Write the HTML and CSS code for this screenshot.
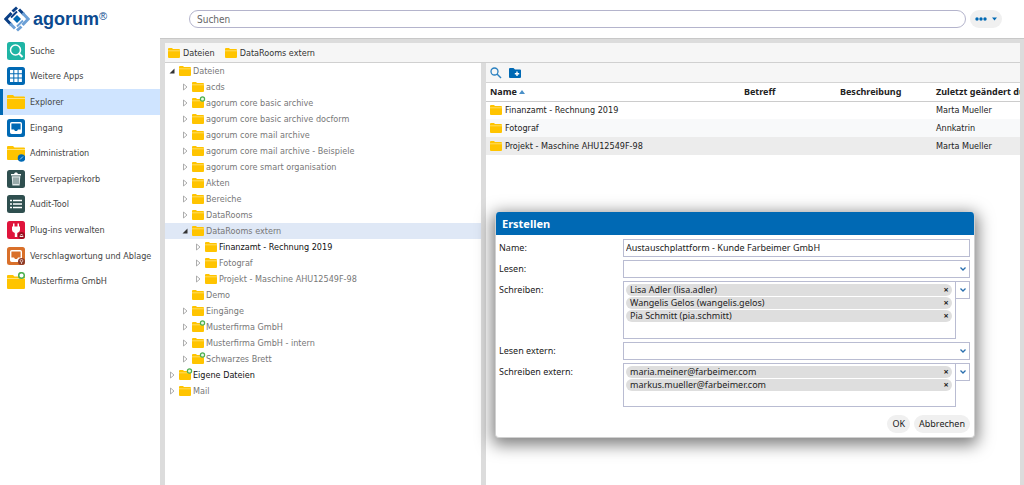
FILE: index.html
```html
<!DOCTYPE html>
<html lang="de">
<head>
<meta charset="utf-8">
<title>agorum core – Explorer</title>
<link rel="stylesheet" href="styles.css">
</head>
<body>
<svg class="defs" aria-hidden="true">
  <symbol id="folder" viewBox="0 0 12 10"><path fill="#ffc400" d="M0 1q0-1 1-1h3l1 1h6q1 0 1 1v7q0 1-1 1H1q-1 0-1-1z"/><path stroke="#ffe27a" stroke-width=".8" d="M0 2.8h12"/></symbol>
  <symbol id="folder-star" viewBox="0 0 14 12"><path fill="#ffc400" d="M0 3q0-1 1-1h3l1 1h6q1 0 1 1v7q0 1-1 1H1q-1 0-1-1z"/><path stroke="#ffe27a" stroke-width=".8" d="M0 4.8h12"/><circle cx="10.5" cy="3" r="2.1" fill="#e8f8e8" stroke="#4caf50" stroke-width="1.2"/></symbol>
  <symbol id="closed" viewBox="0 0 6 8"><path fill="#fff" stroke="#999" stroke-width=".8" d="M1.5 1v6L5 4z"/></symbol>
  <symbol id="open" viewBox="0 0 6 8"><path fill="#333" d="M5.5 1.5v5h-5z"/></symbol>
  <symbol id="chevron" viewBox="0 0 8 6"><path fill="none" stroke="#2a6fae" stroke-width="1.3" d="M1.5 1.5 4 4l2.500-2.500"/></symbol>
</svg>

<header class="top">
  <a class="logo" href="#" aria-label="agorum">
    <svg viewBox="0 0 26 26" width="26" height="26"><g fill="none" stroke-width="3"><path stroke="#0a3f85" d="M7.500 7 1.800 13l5.700 6"/><path stroke="#0a3f85" d="M8.500 5.500 13 1.500M15 3.500l5 5"/><path stroke="#6ca0d6" d="m18.500 7 5.700 6-5.700 6"/><path stroke="#6ca0d6" d="M17.500 20.500 13 24.500M11 22.500l-5-5"/><path stroke="#0a3f85" stroke-width="2" d="M13 5.500 7 11.500"/><path stroke="#6ca0d6" stroke-width="2" d="m13 20.500 6-6"/></g><path fill="#0069b4" d="m13 9 4 4-4 4-4-4z"/></svg>
    <span>agorum<sup>®</sup></span>
  </a>
  <input class="search" type="search" placeholder="Suchen" aria-label="Suchen">
  <button class="more" type="button" aria-label="Mehr"><svg width="26" height="6" viewBox="0 0 26 6"><g fill="#0069b4"><circle cx="2" cy="3" r="1.700"/><circle cx="6" cy="3" r="1.700"/><circle cx="10" cy="3" r="1.700"/><path d="M17 1.500h5L19.500 4.500z"/></g></svg></button>
</header>

<div class="app">
  <nav class="side">
    <a href="#"><svg viewBox="0 0 18 18"><rect width="18" height="18" rx="2.500" fill="#1fb5a5"/><circle cx="8.500" cy="8" r="5" fill="none" stroke="#fff" stroke-width="1.500"/><path stroke="#fff" stroke-width="2" d="m12 11.500 3.500 3.500"/></svg>Suche</a>
    <a href="#"><svg viewBox="0 0 18 18"><rect width="18" height="18" rx="2.500" fill="#0069b4"/><path fill="#fff" d="M3 3h3.300v3.300H3zM7.300 3h3.300v3.300H7.300zM11.600 3h3.300v3.300h-3.300zM3 7.300h3.300v3.300H3zM7.300 7.300h3.300v3.300H7.300zM11.600 7.300h3.300v3.300h-3.300zM3 11.600h3.300v3.300H3zM7.300 11.600h3.300v3.300H7.300zM11.600 11.600h3.300v3.300h-3.300z"/></svg>Weitere Apps</a>
    <a class="on" href="#" aria-current="page"><svg viewBox="0 0 18 18"><path fill="#ffc400" d="M0 3q0-1 1-1h5l1.500 1.500H17q1 0 1 1V15q0 1-1 1H1q-1 0-1-1z"/><path stroke="#ffe27a" d="M0 5.500h18"/></svg>Explorer</a>
    <a href="#"><svg viewBox="0 0 18 18"><rect width="18" height="18" rx="2.500" fill="#0069b4"/><rect x="3.700" y="3.700" width="10.600" height="10.600" rx="1" fill="none" stroke="#fff" stroke-width="1.400"/><path fill="#fff" d="M4 10.500h3l1 1.500h2l1-1.500h3V14H4z"/></svg>Eingang</a>
    <a href="#"><svg viewBox="0 0 18 18"><path fill="#ffc400" d="M0 3q0-1 1-1h5l1.500 1.500H17q1 0 1 1V15q0 1-1 1H1q-1 0-1-1z"/><path stroke="#ffe27a" d="M0 5.500h18"/><circle cx="14.500" cy="14" r="3.800" fill="#0069b4"/><path stroke="#9fd0f5" d="m13 15.500 3-3"/></svg>Administration</a>
    <a href="#"><svg viewBox="0 0 18 18"><rect width="18" height="18" rx="2.500" fill="#2f4f4f"/><path fill="#fff" d="M4 4h3l1-1.500h2L11 4h3v1.500H4z"/><path fill="#dfe6e6" d="M4.700 6.300h8.600l-.7 9.200H5.400z"/><path stroke="#2f4f4f" stroke-width=".8" d="M7 7.500v6.500M9 7.500v6.500M11 7.500v6.500"/></svg>Serverpapierkorb</a>
    <a href="#"><svg viewBox="0 0 18 18"><rect width="18" height="18" rx="2.500" fill="#2f4f4f"/><path stroke="#fff" stroke-width="1.500" d="M3 5.500h2M6 5.500h9M3 9h2M6 9h9M3 12.500h2M6 12.500h9"/></svg>Audit-Tool</a>
    <a href="#"><svg viewBox="0 0 18 18"><rect width="18" height="18" rx="2.500" fill="#e0143c"/><path fill="#fff" d="M6 2.500h1.500v3h3v-3H12v3h1V9q0 2-2.800 3v4H7.800v-4Q5 11 5 9V5.500h1z"/><circle cx="14.500" cy="14.500" r="3.500" fill="#9a1020"/><path fill="none" stroke="#fff" stroke-width=".9" d="M12.700 15.500h3.600M13.300 14.500l1.200-1.500 1.200 1.500"/></svg>Plug-ins verwalten</a>
    <a href="#"><svg viewBox="0 0 18 18"><rect width="18" height="18" rx="2.500" fill="#d9702a"/><rect x="3.700" y="3.700" width="10.600" height="10.600" rx="1" fill="none" stroke="#fff" stroke-width="1.400"/><path fill="#fff" d="M4 10.500h3l1 1.500h2l1-1.500h3V14H4z"/><circle cx="14.500" cy="14.500" r="3.500" fill="#8b3a2a"/><circle cx="14.500" cy="13.800" r="1.300" fill="none" stroke="#f0d8cc" stroke-width=".8"/><path stroke="#f0d8cc" stroke-width=".8" d="M14.500 15v2"/></svg>Verschlagwortung und Ablage</a>
    <a href="#"><svg viewBox="0 0 18 18"><path fill="#ffc400" d="M0 4q0-1 1-1h5l1.500 1.500H17q1 0 1 1V16q0 1-1 1H1q-1 0-1-1z"/><path stroke="#ffe27a" d="M0 6.500h18"/><circle cx="14.500" cy="3.500" r="2.800" fill="#fff" stroke="#4caf50" stroke-width="1.500"/></svg>Musterfirma GmbH</a>
  </nav>

  <main class="work">
    <nav class="crumbs">
      <a href="#"><svg class="f"><use href="#folder"/></svg>Dateien</a>
      <a href="#"><svg class="f"><use href="#folder"/></svg>DataRooms extern</a>
    </nav>
    <div class="split">
      <ul class="tree">
        <li><svg class="t"><use href="#open"/></svg><svg class="f"><use href="#folder"/></svg>Dateien</li>
        <li class="l1"><svg class="t"><use href="#closed"/></svg><svg class="f"><use href="#folder"/></svg>acds</li>
        <li class="l1"><svg class="t"><use href="#closed"/></svg><svg class="s"><use href="#folder-star"/></svg>agorum core basic archive</li>
        <li class="l1"><svg class="t"><use href="#closed"/></svg><svg class="f"><use href="#folder"/></svg>agorum core basic archive docform</li>
        <li class="l1"><svg class="t"><use href="#closed"/></svg><svg class="f"><use href="#folder"/></svg>agorum core mail archive</li>
        <li class="l1"><svg class="t"><use href="#closed"/></svg><svg class="f"><use href="#folder"/></svg>agorum core mail archive - Beispiele</li>
        <li class="l1"><svg class="t"><use href="#closed"/></svg><svg class="f"><use href="#folder"/></svg>agorum core smart organisation</li>
        <li class="l1"><svg class="t"><use href="#closed"/></svg><svg class="f"><use href="#folder"/></svg>Akten</li>
        <li class="l1"><svg class="t"><use href="#closed"/></svg><svg class="f"><use href="#folder"/></svg>Bereiche</li>
        <li class="l1"><svg class="t"><use href="#closed"/></svg><svg class="f"><use href="#folder"/></svg>DataRooms</li>
        <li class="l1 sel"><svg class="t"><use href="#open"/></svg><svg class="f"><use href="#folder"/></svg>DataRooms extern</li>
        <li class="l2 dark"><svg class="t"><use href="#closed"/></svg><svg class="f"><use href="#folder"/></svg>Finanzamt - Rechnung 2019</li>
        <li class="l2"><svg class="t"><use href="#closed"/></svg><svg class="f"><use href="#folder"/></svg>Fotograf</li>
        <li class="l2"><svg class="t"><use href="#closed"/></svg><svg class="f"><use href="#folder"/></svg>Projekt - Maschine AHU12549F-98</li>
        <li class="l1"><svg class="t"></svg><svg class="f"><use href="#folder"/></svg>Demo</li>
        <li class="l1"><svg class="t"><use href="#closed"/></svg><svg class="f"><use href="#folder"/></svg>Eingänge</li>
        <li class="l1"><svg class="t"><use href="#closed"/></svg><svg class="s"><use href="#folder-star"/></svg>Musterfirma GmbH</li>
        <li class="l1"><svg class="t"><use href="#closed"/></svg><svg class="f"><use href="#folder"/></svg>Musterfirma GmbH - intern</li>
        <li class="l1"><svg class="t"><use href="#closed"/></svg><svg class="s"><use href="#folder-star"/></svg>Schwarzes Brett</li>
        <li class="dark"><svg class="t"><use href="#closed"/></svg><svg class="s"><use href="#folder-star"/></svg>Eigene Dateien</li>
        <li><svg class="t"><use href="#closed"/></svg><svg class="f"><use href="#folder"/></svg>Mail</li>
      </ul>
      <section class="list">
        <div class="tools">
          <button type="button" aria-label="Suchen"><svg width="12" height="12" viewBox="0 0 12 12"><circle cx="4.500" cy="4.500" r="3.500" fill="none" stroke="#2a80c0" stroke-width="1.300"/><path stroke="#2a80c0" stroke-width="1.500" d="m7 7 4 4"/></svg></button>
          <button type="button" aria-label="Neuer Ordner"><svg width="12" height="12" viewBox="0 0 12 12"><path fill="#0069b4" d="M0 2q0-1 1-1h3.500L6 2.500h5q1 0 1 1V10q0 1-1 1H1q-1 0-1-1z"/><path stroke="#fff" stroke-width="1.400" d="M8 4.500v4.400M5.800 6.700h4.400"/></svg></button>
        </div>
        <table>
          <colgroup><col class="c1"><col class="c2"><col class="c2"><col></colgroup>
          <thead><tr><th>Name <svg width="6" height="4" viewBox="0 0 6 4"><path fill="#4a90c8" d="M0 4h6L3 0z"/></svg></th><th>Betreff</th><th>Beschreibung</th><th>Zuletzt geändert durch</th></tr></thead>
          <tbody>
            <tr><td><svg class="f"><use href="#folder"/></svg>Finanzamt - Rechnung 2019</td><td></td><td></td><td>Marta Mueller</td></tr>
            <tr class="alt"><td><svg class="f"><use href="#folder"/></svg>Fotograf</td><td></td><td></td><td>Annkatrin</td></tr>
            <tr class="cur"><td><svg class="f"><use href="#folder"/></svg>Projekt - Maschine AHU12549F-98</td><td></td><td></td><td>Marta Mueller</td></tr>
          </tbody>
        </table>
      </section>
    </div>
  </main>
</div>

<form class="dialog" role="dialog" aria-labelledby="dlg">
  <h2 id="dlg">Erstellen</h2>
  <div class="fields">
    <label for="n">Name:</label>
    <input id="n" class="box" type="text" value="Austauschplattform - Kunde Farbeimer GmbH">
    <label for="r">Lesen:</label>
    <div class="drop"><select id="r" class="box"><option></option></select><svg><use href="#chevron"/></svg></div>
    <label for="w">Schreiben:</label>
    <div class="multi">
      <ul class="three">
        <li>Lisa Adler (lisa.adler)<button type="button" aria-label="Entfernen">×</button></li>
        <li>Wangelis Gelos (wangelis.gelos)<button type="button" aria-label="Entfernen">×</button></li>
        <li>Pia Schmitt (pia.schmitt)<button type="button" aria-label="Entfernen">×</button></li>
      </ul>
      <button id="w" class="trigger" type="button"><svg><use href="#chevron"/></svg></button>
    </div>
    <label for="re">Lesen extern:</label>
    <div class="drop"><select id="re" class="box"><option></option></select><svg><use href="#chevron"/></svg></div>
    <label for="we">Schreiben extern:</label>
    <div class="multi">
      <ul>
        <li>maria.meiner@farbeimer.com<button type="button" aria-label="Entfernen">×</button></li>
        <li>markus.mueller@farbeimer.com<button type="button" aria-label="Entfernen">×</button></li>
      </ul>
      <button id="we" class="trigger" type="button"><svg><use href="#chevron"/></svg></button>
    </div>
  </div>
  <div class="actions"><button type="submit">OK</button><button type="button">Abbrechen</button></div>
</form>
</body>
</html>
```
FILE: styles.css
```css
* { box-sizing: border-box; margin: 0; padding: 0; }
html, body { height: 100%; }
body {
  display: flex;
  flex-direction: column;
  overflow: hidden;
  background: #fff;
  color: #333;
  font: 9px/16px "DejaVu Sans Condensed", "Noto Sans", sans-serif;
}
button, input, select { font: inherit; color: inherit; }
button { border: 0; background: none; cursor: pointer; }
a { color: inherit; text-decoration: none; }
ul { list-style: none; }
svg { flex: none; }
.defs { position: absolute; width: 0; height: 0; }
.f { width: 12px; height: 10px; }
.s { width: 14px; height: 12px; margin: 0 -2px 2px 0; }
.t { width: 6px; height: 8px; }

.top { display: flex; align-items: center; height: 38px; padding-left: 4px; }
.logo {
  display: flex;
  align-items: center;
  gap: 3px;
  width: 185px;
  color: #0b4a8f;
  font: bold 18px/26px "Liberation Sans", sans-serif;
}
.logo sup { font-size: 11px; line-height: 11px; vertical-align: 5px; font-weight: normal; }
.search {
  flex: 1;
  height: 18px;
  padding: 0 7px;
  border: 1px solid #b4b4cc;
  border-radius: 9px;
  appearance: none;
  font-size: 10px;
}
.search::placeholder { color: #666; }
.more {
  display: flex;
  align-items: center;
  height: 18px;
  margin: 0 22px 0 4px;
  padding: 0 1px 0 5px;
  border-radius: 9px;
  background: #f0f0f0;
}

.app { display: flex; flex: 1; min-height: 0; }
.side { display: flex; flex-direction: column; width: 160px; height: 256px; }
.side a {
  display: flex;
  flex: 1;
  align-items: center;
  gap: 5px;
  padding-left: 7px;
  color: #444;
  white-space: nowrap;
}
.side svg { width: 18px; height: 18px; }
.side .on { background: #cfe4ff; box-shadow: inset 3px 0 #0069b4; }

.work {
  display: flex;
  flex: 1;
  flex-direction: column;
  min-width: 0;
  padding: 5px 4px 0 5px;
  background: #dcdcdc;
  box-shadow: inset 0 1px #c8c8c8;
}
.crumbs {
  display: flex;
  gap: 10px;
  height: 20px;
  padding-left: 3px;
  border-bottom: 1px solid #d0d0d0;
  background: #f6f6f6;
}
.crumbs a { display: flex; align-items: center; gap: 3px; }
.split { display: flex; flex: 1; gap: 5px; min-height: 0; }
.tree { flex: 316 1 0; background: #fff; color: #777; }
.tree li { display: flex; align-items: center; height: 16px; padding-left: 4px; white-space: nowrap; }
.tree .t { margin-right: 4px; }
.tree .f { margin-right: 2px; }
.tree .s { margin-right: 0; }
.tree .l1 { padding-left: 17px; }
.tree .l2 { padding-left: 30px; }
.tree .dark { color: #111; }
.tree .sel { background: #dfe8f6; }

.list { flex: 534 1 0; overflow: hidden; background: #fff; }
.tools {
  display: flex;
  align-items: center;
  gap: 7px;
  height: 20px;
  padding-left: 4px;
  border-bottom: 1px solid #d4d4d4;
  background: #f6f6f6;
}
.tools button, .tools svg { display: block; }
table { width: 100%; border-collapse: collapse; table-layout: fixed; color: #222; }
.c1 { width: 254px; }
.c2 { width: 96px; }
th, td { height: 18px; padding-left: 4px; overflow: hidden; text-align: left; line-height: 16px; white-space: nowrap; }
th { border-bottom: 1px solid #ccc; font-family: "Noto Sans", sans-serif; }
th svg { vertical-align: 1px; }
td .f { margin-right: 3px; vertical-align: -2px; }
.alt { background: #f8f9fa; }
.cur { background: #ececec; }

.dialog {
  position: absolute;
  top: 212px;
  left: 495px;
  width: 480px;
  border: 1px solid #d0d0d0;
  border-top: 0;
  border-radius: 4px;
  background: #fff;
  color: #222;
  font-family: "Noto Sans", sans-serif;
  box-shadow: 0 4px 16px 3px rgba(0, 0, 0, .5);
  overflow: clip;
}
.dialog h2 {
  height: 23px;
  padding-left: 6px;
  background: #0069b4;
  color: #fff;
  font: bold 11px/23px "Noto Sans", sans-serif;
}
.fields { display: grid; grid-template-columns: 124px 1fr; gap: 3px 0; padding: 4px 4px 0 3px; line-height: 18px; }
.box { display: block; width: 100%; height: 18px; padding: 0 2px; border: 1px solid #b9bcd2; border-radius: 0; background: #fff; appearance: none; }
.drop { position: relative; }
.drop svg { position: absolute; top: 6px; right: 3px; width: 8px; height: 6px; pointer-events: none; }
.multi { display: flex; align-items: flex-start; }
.multi ul { display: flex; flex: 1; flex-direction: column; gap: 1px; min-height: 44px; padding: 2px 3px 2px 2px; border: 1px solid #b9bcd2; }
.multi .three { min-height: 58px; }
.multi li { display: flex; justify-content: space-between; height: 12px; padding: 0 3px 0 4px; border-radius: 6px; background: #dedede; line-height: 12px; color: #222; }
.multi li button { width: 6px; font-weight: bold; line-height: 12px; }
.trigger { display: flex; align-items: center; justify-content: center; width: 14px; height: 18px; border: 1px solid #b9bcd2; border-left: 0; }
.trigger svg { width: 8px; height: 6px; }
.actions { display: flex; justify-content: flex-end; gap: 4px; padding: 8px 4px 4px; }
.actions button { height: 18px; padding: 0 5px; border-radius: 9px; background: #f0f0f0; }
```
